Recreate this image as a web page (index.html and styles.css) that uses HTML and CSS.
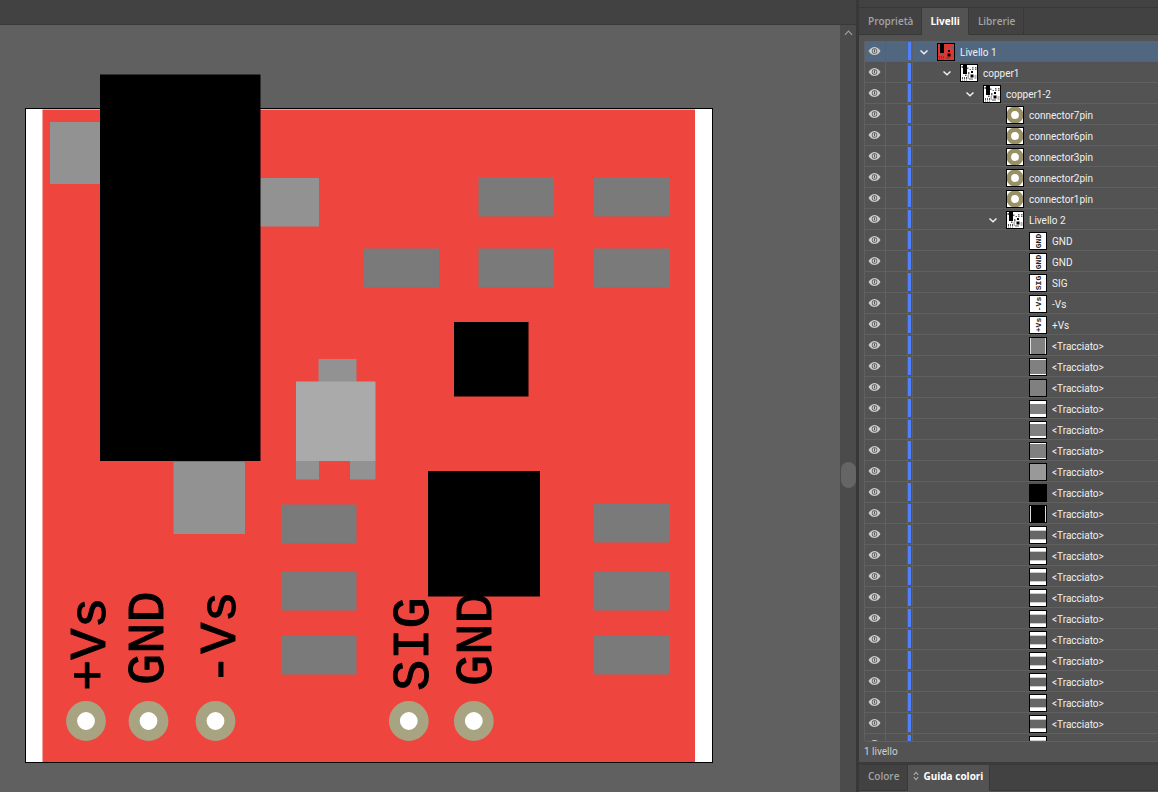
FILE: index.html
```html
<!DOCTYPE html>
<html lang="it">
<head>
<meta charset="utf-8">
<title>Livelli</title>
<link rel="stylesheet" href="styles.css">
</head>
<body>
<svg class="defs" aria-hidden="true">
  <symbol id="eye" viewBox="0 0 12 10">
    <path d="M0 5C2 2 4 1 6 1s4 1 6 4c-2 3-4 4-6 4S2 8 0 5z" fill="#cccccc"/>
    <circle cx="6" cy="5" r="2.700" fill="#535353"/>
    <circle cx="6" cy="5" r="2" fill="#cccccc"/>
    <path d="M6 3.400v2.800" stroke="#535353" stroke-width="1"/>
  </symbol>
  <symbol id="chevron" viewBox="0 0 10 8">
    <path d="M1.500 2.500L5 5.700l3.500-3.200" fill="none" stroke="#f0f0f0" stroke-width="1.500"/>
  </symbol>
  <symbol id="board" viewBox="0 0 16 16">
    <path d="M2 0h4v9H2zM10 6h2v2h-2zM9.500 9.500h3v3h-3z" fill="#000"/>
    <path d="M.5 1h1.500v2H.5zM6 2.500h1.500v1.500H6zM11 2h1.500v1.500H11zM14 2h1.500v1.500H14zM8.500 4h1.500v1H8.500zM11 4h1.500v1H11zM14 4h1.500v1H14zM7 7h1.500v2.500H7zM4 9.500h1.500v1.500H4zM6.500 10.500h1.500v1H6.500zM6.500 12.500h1.500v1H6.500zM13.500 10.500h2v1h-2zM13.500 12.500h2v1h-2z" fill="#666"/>
    <path d="M1.500 12v3.500M3.500 12v3.500M5.500 12v3.500M9 13v2.500M11 13v2.500" stroke="#444" stroke-width=".9" stroke-dasharray="2 .6"/>
  </symbol>
</svg>
<div class="app">
  <main class="workspace">
    <div class="docbar"></div>
    <div class="stage">
      <svg class="artboard" viewBox="0 0 840 767" preserveAspectRatio="xMinYMin meet" role="img" aria-label="Circuito stampato">
        <g transform="translate(0 -25)">
          <rect x="25.5" y="108.5" width="687" height="654" fill="#fff" stroke="#000"/>
          <rect x="42.500" y="109.500" width="652.500" height="652.500" fill="#ef453f"/>
          <g class="silk">
            <text transform="translate(105 691) rotate(-90)">+Vs</text>
            <text transform="translate(163 685) rotate(-90)">GND</text>
            <text transform="translate(235 685) rotate(-90)">-Vs</text>
            <text transform="translate(428 691) rotate(-90)">SIG</text>
            <text transform="translate(491 686) rotate(-90)">GND</text>
          </g>
          <g fill="#929292">
            <rect x="50" y="122" width="51" height="62"/>
            <rect x="260" y="178" width="59" height="48.500"/>
            <rect x="173.500" y="462" width="71.500" height="72"/>
            <rect x="318.500" y="359" width="38" height="23"/>
            <rect x="296" y="461" width="23" height="18.500"/>
            <rect x="350" y="461" width="25.500" height="18.500"/>
          </g>
          <rect x="296" y="381.500" width="79.500" height="79.500" fill="#aaa"/>
          <g fill="#7a7a7a">
            <rect x="478.500" y="177.500" width="75.500" height="39"/>
            <rect x="593.500" y="177.500" width="76.500" height="39"/>
            <rect x="363.500" y="248.500" width="75.500" height="39"/>
            <rect x="478.500" y="248.500" width="75.500" height="39"/>
            <rect x="593.500" y="248.500" width="76.500" height="39"/>
            <rect x="281" y="504.500" width="75.500" height="39"/>
            <rect x="281" y="571.500" width="75.500" height="39"/>
            <rect x="281" y="635.500" width="75.500" height="39"/>
            <rect x="593.500" y="503.500" width="76.500" height="39"/>
            <rect x="593.500" y="571.500" width="76.500" height="39"/>
            <rect x="593.500" y="635.500" width="76.500" height="39"/>
          </g>
          <rect x="100" y="74.500" width="160.500" height="386.500"/>
          <rect x="454" y="322" width="74.500" height="74.500"/>
          <rect x="428" y="471" width="112" height="125.500"/>
          <g fill="#fff" stroke="#a8a380" stroke-width="11">
            <circle cx="86" cy="721" r="14.400"/>
            <circle cx="148.500" cy="721" r="14.400"/>
            <circle cx="215.500" cy="721" r="14.400"/>
            <circle cx="408.800" cy="721" r="14.400"/>
            <circle cx="473.800" cy="721" r="14.400"/>
          </g>
        </g>
      </svg>
      <div class="scrollbar">
        <button class="scroll-up" aria-label="Scorri su"><svg viewBox="0 0 10 6"><path d="M1 5l4-4 4 4" fill="none" stroke="#a0a0a0" stroke-width="1.300"/></svg></button>
        <div class="track-before"></div>
        <div class="scroll-thumb"></div>
        <div class="track-after"></div>
      </div>
    </div>
  </main>
  <aside class="dock">
    <nav class="tabs">
      <button class="tab">Proprietà</button>
      <button class="tab active">Livelli</button>
      <button class="tab">Librerie</button>
    </nav>
    <section class="panel">
      <ul class="layers" id="layers"></ul>
      <div class="status">1 livello</div>
    </section>
    <nav class="tabs lower">
      <button class="tab">Colore</button>
      <button class="tab active"><svg class="updown" viewBox="0 0 6 10" aria-hidden="true"><path d="M.8 3.800L3 1.300l2.200 2.500M.8 6.200L3 8.700l2.200-2.500" fill="none" stroke="#aaa" stroke-width="1.100"/></svg>Guida colori</button>
    </nav>
  </aside>
</div>
<script src="layers.js"></script>
</body>
</html>
```
FILE: styles.css
```css
* { box-sizing: border-box; }
body {
  margin: 0;
  background: #535353;
  color: #f0f0f0;
  font: 10px/20px Roboto, "Open Sans", sans-serif;
  overflow: hidden;
}
button {
  margin: 0;
  padding: 0;
  border: 0;
  background: none;
  color: inherit;
  font: inherit;
}
svg { display: block; }
.defs { display: none; }
.app { display: flex; height: 100vh; }

.workspace { flex: 1; min-width: 0; display: flex; flex-direction: column; background: #606060; }
.docbar { height: 25px; background: #424242; border-bottom: 1px solid #383838; }
.stage { flex: 1; min-height: 0; display: flex; }
.artboard { flex: 1; min-width: 0; height: 100%; }
.silk { font: 52px "Liberation Mono", monospace; fill: #000; stroke: #000; stroke-width: 1px; stroke-linejoin: round; }

.scrollbar { width: 16px; display: flex; flex-direction: column; align-items: center; background: #4b4b4b; }
.scroll-up { height: 16px; display: flex; align-items: center; }
.scroll-up svg { width: 9px; height: 6px; }
.track-before { flex: 58; }
.scroll-thumb { width: 15px; height: 26px; border-radius: 8px; background: #656565; }
.track-after { flex: 42; }

.dock { width: 302px; display: flex; flex-direction: column; border-left: 3px solid #383838; background: #424242; }
.tabs { display: flex; height: 28px; margin-top: 7px; border-top: 1px solid #383838; }
.tab {
  display: flex;
  align-items: center;
  padding: 0 8px 1px 9px;
  border-right: 1px solid #383838;
  border-bottom: 1px solid #383838;
  color: #a4a4a4;
  font-family: "Open Sans", sans-serif;
  font-weight: 600;
}
.tabs::after { content: ""; flex: 1; border-bottom: 1px solid #383838; }
.tab.active { background: #535353; border-bottom-color: #535353; color: #fff; font-weight: 700; }
.tabs:not(.lower) .tab.active { padding-left: 8px; }
.lower { height: 30px; margin: 0; border-top: 3px solid #3b3b3b; border-bottom: 1px solid #535353; }
.lower .tab { padding-bottom: 3px; }
.lower .tab.active { padding-left: 5px; padding-right: 6px; }
.updown { width: 6px; height: 10px; margin-right: 4px; }

.panel { flex: 1; min-height: 0; display: flex; flex-direction: column; padding: 6px 0 0 5px; background: #535353; }
.layers {
  flex: 1;
  min-height: 0;
  margin: 0;
  padding: 0;
  overflow: hidden;
  list-style: none;
  border-left: 1px solid #606060;
  border-bottom: 1px solid #606060;
  border-bottom-left-radius: 4px;
}
.status { height: 20px; color: #d0d0d0; }
.row { display: flex; height: 21px; border-bottom: 1px solid #606060; }
.row.selected { background: #50677f; }
.eye { width: 21px; display: flex; align-items: center; padding-left: 3px; border-right: 1px solid #606060; }
.eye svg { width: 13px; height: 10px; }
.lock { width: 22px; border-right: 1px solid #606060; }
.bar { width: 5px; padding: 1px 1px 1px 0; border-right: 1px solid #606060; }
.bar::before { content: ""; display: block; height: 18px; background: #4f80ff; }
.entry { display: flex; align-items: center; padding-top: 2px; padding-left: calc(var(--depth) * 23px + 4px); }
.toggle { width: 14px; height: 18px; margin-right: 6px; display: flex; align-items: center; justify-content: center; }
.toggle svg { width: 10px; height: 8px; }
.thumb { width: 18px; height: 18px; border: 1px solid #000; margin-right: 5px; background: #fff; }
.thumb svg { width: 16px; height: 16px; }
.name { line-height: 18px; padding-top: 1px; }
.mini { font: bold 8px "Liberation Mono", monospace; fill: #222; text-anchor: middle; }
```
FILE: layers.js
```js
const band = (edge, soft, fill) =>
  `<rect width="16" height="16" fill="#fff"/><rect y="${edge - soft}" width="16" height="${16 - 2 * (edge - soft)}" fill="#ccc"/><rect y="${edge}" width="16" height="${16 - 2 * edge}" fill="${fill}"/>`;
const solid = fill => `<rect width="16" height="16" fill="${fill}"/>`;
const sides = fill => `<rect width="16" height="16" fill="#ddd"/><rect x="1" width="14" height="16" fill="${fill}"/>`;
const board = '<use href="#board"/>';
const ring = '<circle cx="8" cy="8" r="6.200" fill="#fff" stroke="#9a9066" stroke-width="4.600"/>';
const mini = label => `<text class="mini" transform="translate(11 8) rotate(-90)">${label}</text>`;

const layers = [
  { name: "Livello 1", depth: 0, open: true, art: solid("#e8322e") + board, selected: true },
  { name: "copper1", depth: 1, open: true, art: board },
  { name: "copper1-2", depth: 2, open: true, art: board },
  ...[7, 6, 3, 2, 1].map(n => ({ name: `connector${n}pin`, depth: 3, art: ring })),
  { name: "Livello 2", depth: 3, open: true, art: board },
  ...["GND", "GND", "SIG", "-Vs", "+Vs"].map(name => ({ name, depth: 4, art: mini(name) })),
  ...[
    sides("#808080"), band(1, 0, "#808080"), solid("#808080"),
    band(3, 0, "#808080"), band(2, 0, "#808080"), band(1, 0, "#808080"),
    solid("#999"), solid("#000"), sides("#000"),
    ...Array(10).fill(band(4, 1, "#666"))
  ].map(art => ({ name: "<Tracciato>", depth: 4, art })),
  { name: "", depth: 4, art: band(4, 1, "#666") }
];

const escape = text => text.replace(/</g, "&lt;").replace(/>/g, "&gt;");

document.getElementById("layers").innerHTML = layers.map(layer => `
  <li class="row${layer.selected ? " selected" : ""}">
    <button class="eye" aria-label="Visibilità"><svg><use href="#eye"/></svg></button>
    <span class="lock"></span>
    <span class="bar"></span>
    <div class="entry" style="--depth:${layer.depth}">
      ${layer.open ? '<button class="toggle" aria-label="Comprimi"><svg><use href="#chevron"/></svg></button>' : '<span class="toggle"></span>'}
      <span class="thumb"><svg viewBox="0 0 16 16">${layer.art}</svg></span>
      <span class="name">${escape(layer.name)}</span>
    </div>
  </li>`).join("");
```
